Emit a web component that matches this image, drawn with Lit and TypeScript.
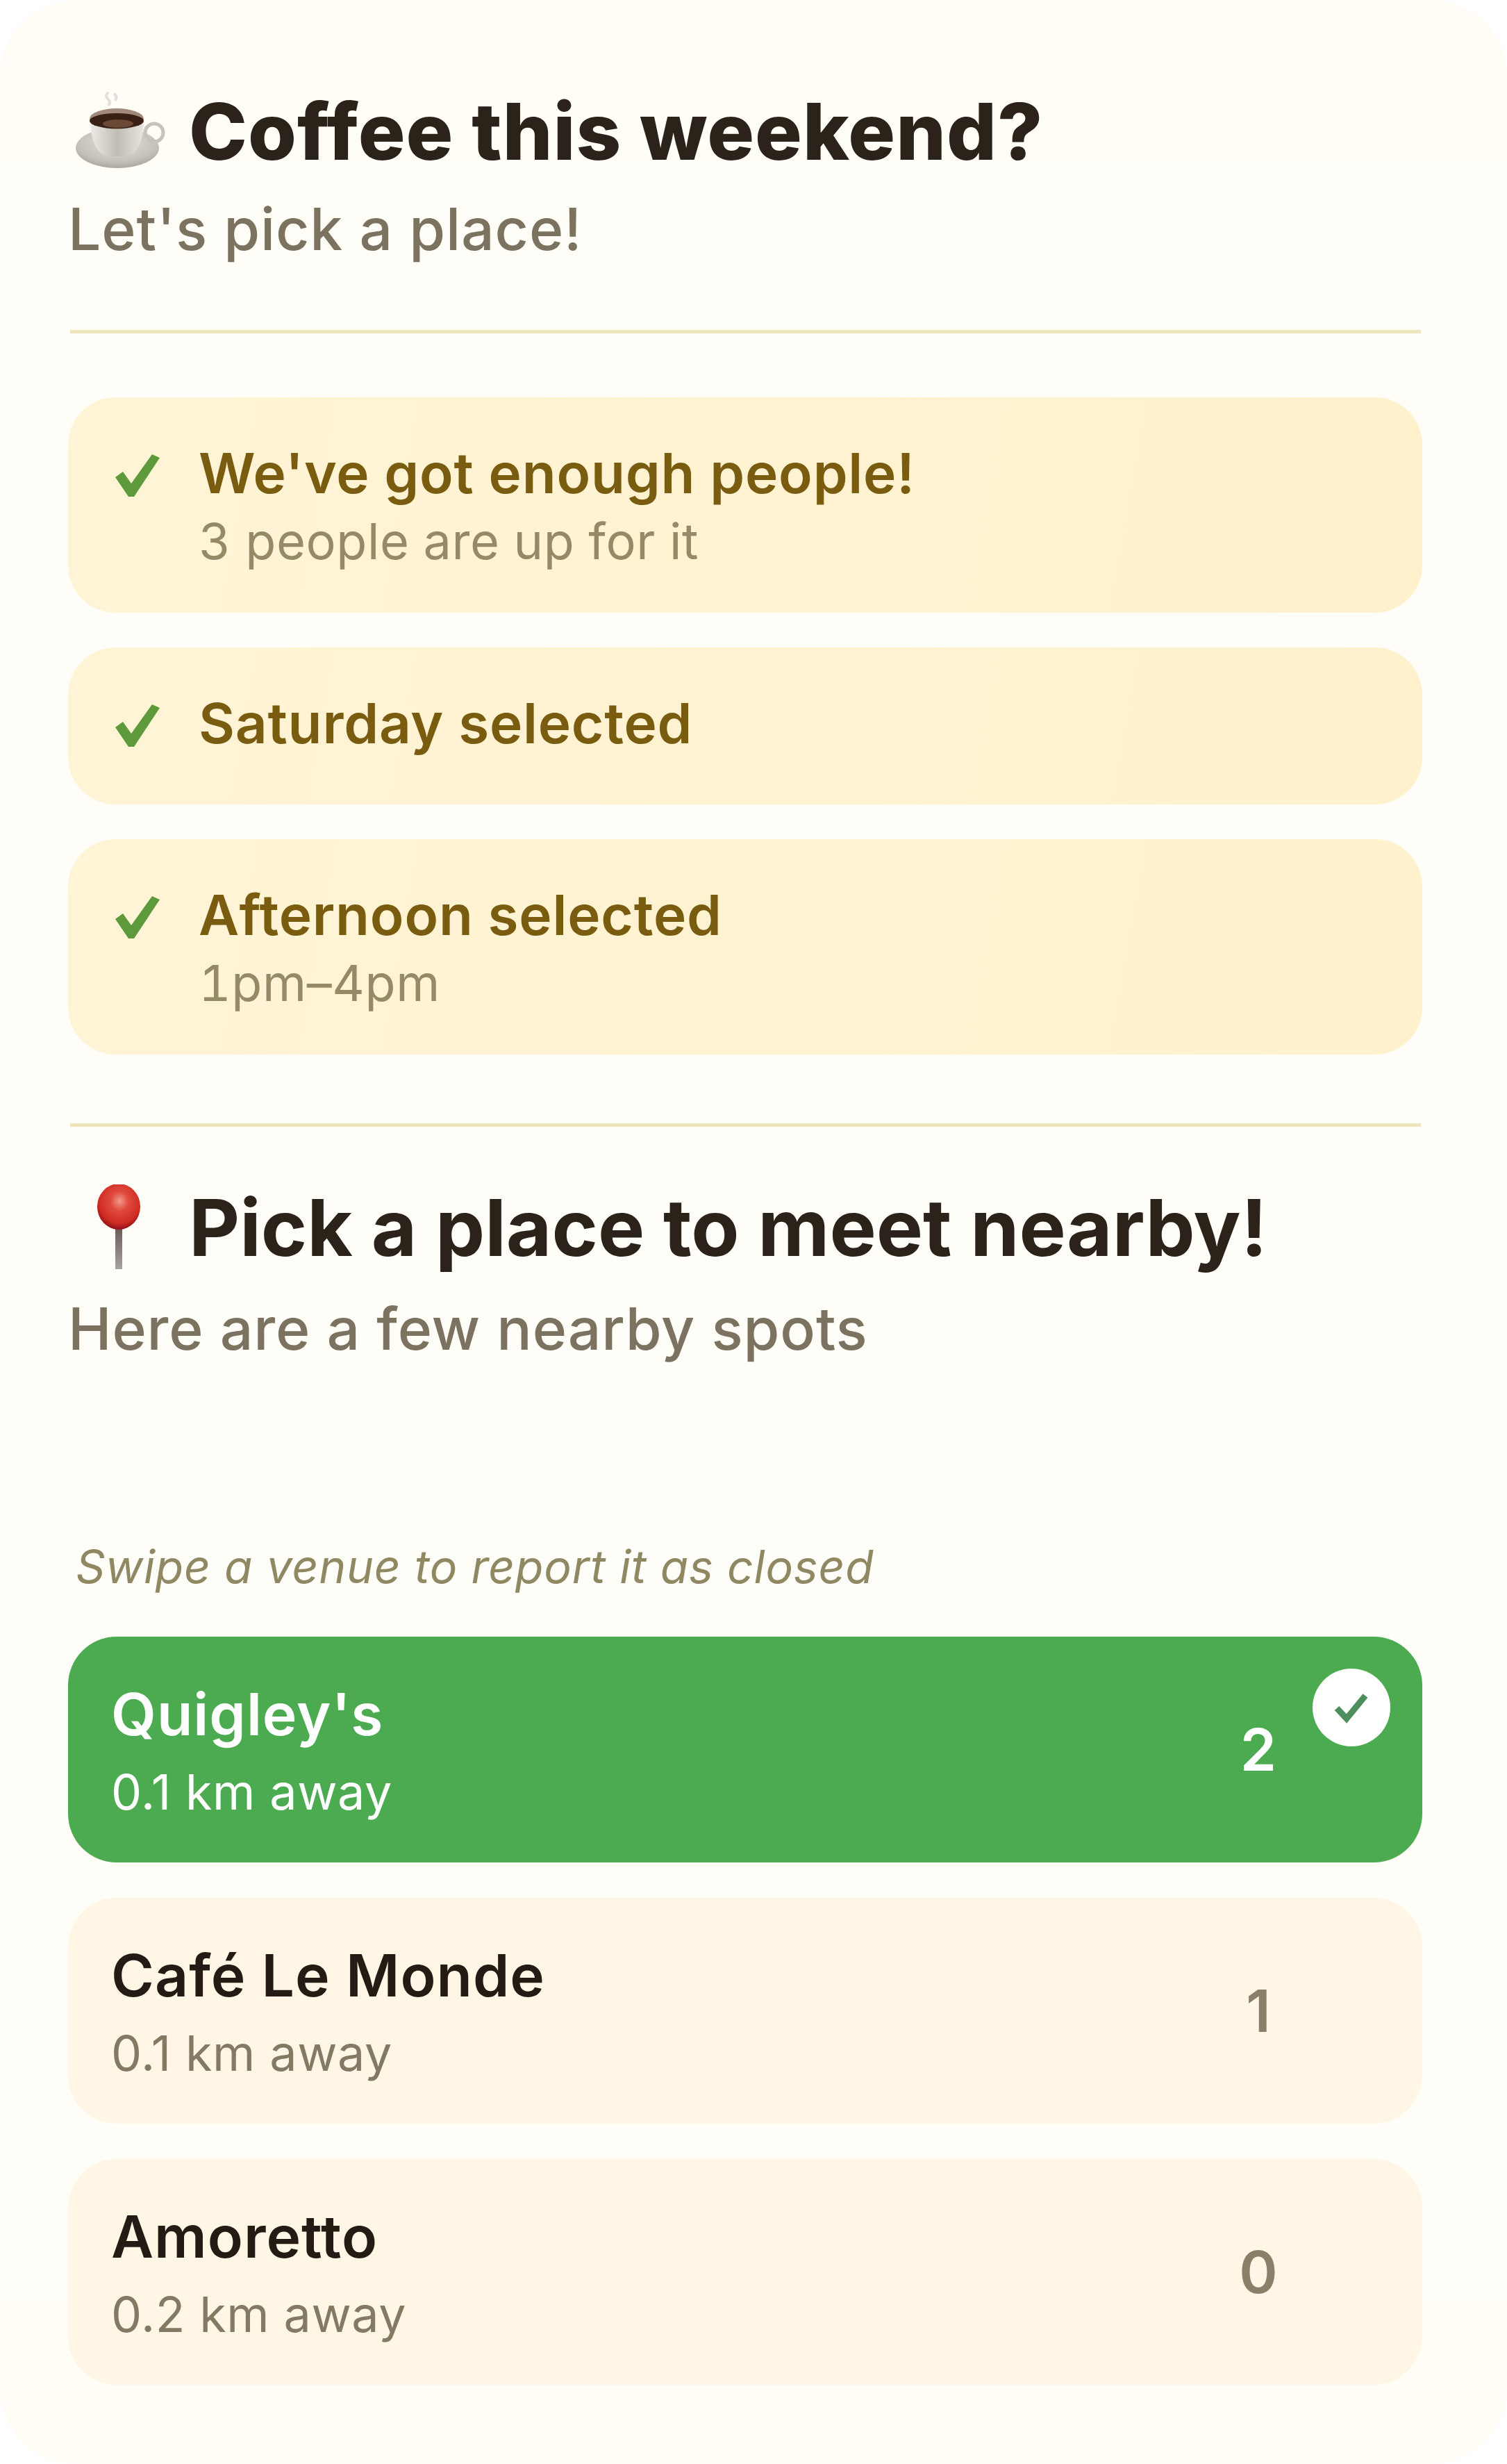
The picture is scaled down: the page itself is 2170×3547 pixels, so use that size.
import { LitElement, html, css, svg } from "lit";
import { customElement } from "lit/decorators.js";

const check = svg`<svg class="chk" viewBox="0 0 64 62" aria-hidden="true"><path d="M0 33 L11 25 L23 42 L53 0 L64 5 L27 61 L19 61 Z" fill="#5c9a3c"/></svg>`;

const coffee = svg`<svg class="emoji" viewBox="0 0 150 120" aria-hidden="true">
  <defs>
    <radialGradient id="sau" cx=".5" cy=".35" r=".7"><stop offset="0" stop-color="#e4e1da"/><stop offset=".7" stop-color="#c4c1b9"/><stop offset="1" stop-color="#a29f97"/></radialGradient>
    <linearGradient id="cup" x1="0" x2="1"><stop offset="0" stop-color="#ecebe5"/><stop offset=".5" stop-color="#bfbcb4"/><stop offset="1" stop-color="#e8e5de"/></linearGradient>
  </defs>
  <path d="M56 4 q-6 5 0 10 q4 4 0 9 M64 6 q6 4 2 10" fill="none" stroke="#e2e0dc" stroke-width="4"/>
  <ellipse cx="69" cy="84" rx="60" ry="29" fill="url(#sau)"/>
  <circle cx="122" cy="62" r="13" fill="none" stroke="#c6c3bc" stroke-width="5"/>
  <path d="M30 42 H107 C107 70 100 94 80 96 H56 C38 94 30 70 30 42 Z" fill="url(#cup)"/>
  <ellipse cx="68" cy="42" rx="39" ry="15" fill="#a08a7c"/>
  <ellipse cx="68" cy="45" rx="39" ry="11" fill="#3a2014"/>
  <ellipse cx="70" cy="49" rx="22" ry="6" fill="#6a4a36"/>
</svg>`;

const pin = svg`<svg class="emoji" viewBox="0 0 150 130" aria-hidden="true">
  <defs>
    <radialGradient id="ball" cx=".52" cy=".38" r=".6"><stop offset="0" stop-color="#f29a8c"/><stop offset=".35" stop-color="#e04a3c"/><stop offset=".8" stop-color="#d02c24"/><stop offset="1" stop-color="#98141a"/></radialGradient>
    <linearGradient id="stick" x1="0" x2="0" y1="0" y2="1"><stop offset="0" stop-color="#6a5a58"/><stop offset="1" stop-color="#a8a4a0"/></linearGradient>
  </defs>
  <rect x="66" y="62" width="10" height="60" fill="url(#stick)"/>
  <ellipse cx="71" cy="32" rx="31" ry="33" fill="url(#ball)"/>
</svg>`;

const statuses = [
  { title: "We've got enough people!", sub: "3 people are up for it" },
  { title: "Saturday selected", sub: "" },
  { title: "Afternoon selected", sub: "1pm–4pm" },
];
const venues = [
  { name: "Quigley's", dist: "0.1 km away", n: 2, on: true },
  { name: "Café Le Monde", dist: "0.1 km away", n: 1, on: false },
  { name: "Amoretto", dist: "0.2 km away", n: 0, on: false },
];

@customElement("app-root")
export class AppRoot extends LitElement {
  static styles = css`
    :host { display: block; width: 2170px; height: 3547px; background: #fff; font-family: Inter, "Noto Sans", "Liberation Sans", sans-serif; }
    .page { box-sizing: border-box; height: 3547px; padding: 115px 122px 0 98px; border-radius: 110px; background: linear-gradient(180deg, #fffdf6 0%, #fffdf8 50%, #fffdf6 100%); }
    .head { display: flex; align-items: center; gap: 22px; padding-left: 2px; height: 148px; }
    .emoji { width: 150px; flex: none; display: block; }
    h1 { margin: 0; font-size: 113px; font-weight: 700; line-height: 148px; color: #2b221a; letter-spacing: 0; white-space: nowrap; }
    .head1 h1 { font-weight: 800; letter-spacing: 1px; }
    .head2 .emoji { margin-top: 6px; }
    .sub { margin: 15px 0 0; font-size: 84px; font-weight: 500; line-height: 104px; color: #7c7260; letter-spacing: 0.85px; white-space: nowrap; }
    .head2 + .sub { margin-top: 20px; }
    .rule { height: 5px; margin: 0 2px 0 3px; background: #efe5bd; }
    .r1 { margin-top: 93px; }
    .statuses { display: flex; flex-direction: column; gap: 50px; margin-top: 92px; }
    .status { box-sizing: border-box; display: flex; gap: 56px; padding: 64px 64px 64px 68px; border-radius: 68px; background: linear-gradient(100deg, #fff4d6, #fef1cc); }
    .status.two { height: 310px; }
    .status.one { height: 226px; padding-top: 64px; }
    .chk { width: 64px; height: 62px; flex: none; margin-top: 18px; }
    .st { font-size: 80px; font-weight: 600; line-height: 90px; color: #7a5c10; letter-spacing: 0.8px; white-space: nowrap; }
    .sd { font-size: 72px; font-weight: 400; line-height: 90px; margin-top: 8px; color: #958a66; letter-spacing: 0.6px; font-feature-settings: "tnum"; white-space: nowrap; }
    .r2 { margin-top: 99px; }
    .head2 { margin-top: 71px; }
    .hint { margin: 250px 0 0 11px; font-size: 66px; line-height: 80px; font-style: italic; color: #8f8862; letter-spacing: 0.8px; white-space: nowrap; }
    .venues { display: flex; flex-direction: column; gap: 51px; margin-top: 61px; }
    .venue { position: relative; box-sizing: border-box; height: 325px; display: flex; align-items: center; justify-content: space-between; padding: 0 206px 0 62px; border-radius: 70px; background: #fff6e6; }
    .venue.on { background: #4cab50; }
    .txt { margin-top: 8px; }
    .name { font-size: 84px; font-weight: 600; line-height: 100px; color: #241c14; letter-spacing: 1px; white-space: nowrap; }
    .dist { font-size: 70px; font-weight: 400; line-height: 96px; margin-top: 14px; color: #837a64; letter-spacing: 0.6px; white-space: nowrap; }
    .on .name, .on .dist, .on .count { color: #fff; }
    .count { width: 60px; text-align: center; font-size: 84px; font-weight: 600; line-height: 100px; color: #8a806a; }
    .badge { position: absolute; top: 46px; right: 46px; width: 112px; height: 112px; border-radius: 50%; background: #fff; display: flex; align-items: center; justify-content: center; }
    .badge svg { width: 52px; height: 46px; display: block; }
  `;

  render() {
    return html`<div class="page">
      <div class="head head1">${coffee}<h1>Coffee this weekend?</h1></div>
      <p class="sub">Let's pick a place!</p>
      <div class="rule r1"></div>
      <div class="statuses">
        ${statuses.map((s) => html`<div class="status ${s.sub ? "two" : "one"}">
          ${check}
          <div><div class="st">${s.title}</div>${s.sub ? html`<div class="sd">${s.sub}</div>` : ""}</div>
        </div>`)}
      </div>
      <div class="rule r2"></div>
      <div class="head head2">${pin}<h1>Pick a place to meet nearby!</h1></div>
      <p class="sub">Here are a few nearby spots</p>
      <p class="hint">Swipe a venue to report it as closed</p>
      <div class="venues">
        ${venues.map((v) => html`<div class="venue ${v.on ? "on" : ""}">
          <div class="txt"><div class="name">${v.name}</div><div class="dist">${v.dist}</div></div>
          <div class="count">${v.n}</div>
          ${v.on ? html`<div class="badge"><svg viewBox="0 0 52 46" aria-hidden="true"><path d="M5 24 L19 39 L46 6" fill="none" stroke="#4c8f5c" stroke-width="9"/></svg></div>` : ""}
        </div>`)}
      </div>
    </div>`;
  }
}
